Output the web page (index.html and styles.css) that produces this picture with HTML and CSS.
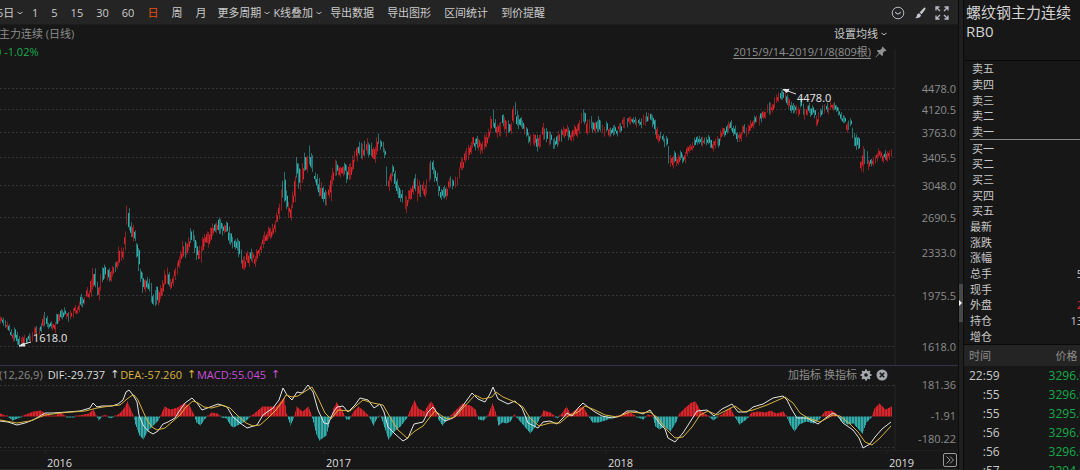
FILE: index.html
```html
<!DOCTYPE html>
<html lang="zh-CN">
<head>
	<meta charset="UTF-8">
	<title>螺纹钢主力连续</title>
	<link rel="stylesheet" href="styles.css">
</head>
<body>
	<div class="app">
		<main class="main">
			<nav class="toolbar">
				<button class="cycle">5日<svg class="chev" viewBox="0 0 6 4"><path d="M.5 .8Q3 4.4 5.5 .8"/></svg></button>
				<div class="periods">
					<button>1</button>
					<button>5</button>
					<button>15</button>
					<button>30</button>
					<button>60</button>
					<button class="active">日</button>
					<button>周</button>
					<button>月</button>
				</div>
				<button class="more">更多周期<svg class="chev" viewBox="0 0 6 4"><path d="M.5 .8Q3 4.4 5.5 .8"/></svg></button>
				<button class="overlay">K线叠加<svg class="chev" viewBox="0 0 6 4"><path d="M.5 .8Q3 4.4 5.5 .8"/></svg></button>
				<div class="tools">
					<button>导出数据</button>
					<button>导出图形</button>
					<button>区间统计</button>
					<button>到价提醒</button>
				</div>
				<div class="icons">
					<button aria-label="展开"><svg viewBox="0 0 14 14"><circle cx="7" cy="7" r="5.8" fill="none" stroke="#b5b8c0"/><path d="M4.3 6Q7 10 9.7 6" fill="none" stroke="#b5b8c0" stroke-width="1.2"/></svg></button>
					<button aria-label="画线"><svg viewBox="0 0 14 14"><path d="M12 1.6Q13 2.3 12.2 3.6L8.6 8.3 6.6 6.6 10.8 2.1Q11.5 1.3 12 1.6Z" fill="#c6c9d2"/><path d="M6 7.2 8 9Q7.6 12.2 2.2 12.3 3.8 11.2 3.9 9.5 4.2 7.4 6 7.2Z" fill="#c6c9d2"/></svg></button>
					<button aria-label="全屏"><svg viewBox="0 0 14 14"><path d="M1 4.500V1H4.500M9.500 1H13V4.500M13 9.500V13H9.500M4.500 13H1V9.500M1.500 1.500 5 5M12.500 1.500 9 5M12.500 12.500 9 9M1.500 12.500 5 9" fill="none" stroke="#b9bcc6" stroke-width="1.300"/></svg></button>
				</div>
			</nav>
			<div class="info">
				<span class="name">主力连续 (日线)</span>
				<button class="right-item">设置均线<svg class="chev" viewBox="0 0 6 4"><path d="M.5 .8Q3 4.4 5.5 .8"/></svg></button>
			</div>
			<div class="info">
				<span class="change">0 -1.02%</span>
				<a class="range" href="#">2015/9/14-2019/1/8(809根)</a>
				<svg class="pin" viewBox="0 0 12 12"><path d="M7.5 .5 11.5 4.5 10.5 5.2 9.7 5 8 7 8 9.3 7 10 4.6 7.7 .8 11.4 .5 11 4 7.1 1.9 5 2.7 4 5 4.1 7 2.3 6.8 1.4Z" fill="#8f8f8f"/></svg>
			</div>
			<svg class="kline" id="kline"></svg>
			<section class="macd">
				<div class="legend">
					<span>(12,26,9)</span>
					<span class="dif">DIF:-29.737</span><i class="dif">↑</i>
					<span class="dea">DEA:-57.260</span><i class="dea">↑</i>
					<span class="bar">MACD:55.045</span><i class="bar">↑</i>
					<div class="actions">
						<button>加指标</button>
						<button>换指标</button>
						<button class="ico" aria-label="设置"><svg viewBox="0 0 12 12"><circle cx="6" cy="6" r="3" fill="none" stroke="#a5a8ad" stroke-width="2.4"/><path d="M6 .5V2.5M6 9.5V11.5M.5 6H2.5M9.5 6H11.5M2.1 2.1 3.5 3.5M8.5 8.5 9.9 9.9M9.9 2.1 8.5 3.5M3.5 8.5 2.1 9.9" stroke="#a5a8ad" stroke-width="2"/></svg></button>
						<button class="ico" aria-label="关闭"><svg viewBox="0 0 12 12"><circle cx="6" cy="6" r="5.5" fill="#a5a8ad"/><path d="M3.8 3.8 8.2 8.2M8.2 3.8 3.8 8.2" stroke="#171717" stroke-width="1.6"/></svg></button>
					</div>
				</div>
				<svg class="macd-plot" id="macd"></svg>
			</section>
			<footer class="axis">
				<svg class="years" id="years"></svg>
				<button class="expand" aria-label="更多"><svg viewBox="0 0 14 14"><rect x=".5" y=".5" width="13" height="13" rx="1.5"/><path d="M3.5 3.5 7 7 3.5 10.5M7 3.5 10.5 7 7 10.5"/></svg></button>
			</footer>
		</main>
		<div class="splitter"><button class="handle" aria-label="收起"></button></div>
		<aside class="side">
			<header class="title">
				<h1>螺纹钢主力连续</h1>
				<p>RB0</p>
			</header>
			<dl class="quotes">
				<div class="lv"><dt>卖五</dt><dd></dd></div>
				<div class="lv"><dt>卖四</dt><dd></dd></div>
				<div class="lv"><dt>卖三</dt><dd></dd></div>
				<div class="lv"><dt>卖二</dt><dd></dd></div>
				<div class="lv last-ask"><dt>卖一</dt><dd></dd></div>
				<div class="lv"><dt>买一</dt><dd></dd></div>
				<div class="lv"><dt>买二</dt><dd></dd></div>
				<div class="lv"><dt>买三</dt><dd></dd></div>
				<div class="lv"><dt>买四</dt><dd></dd></div>
				<div class="lv"><dt>买五</dt><dd></dd></div>
				<div><dt>最新</dt><dd></dd></div>
				<div><dt>涨跌</dt><dd></dd></div>
				<div><dt>涨幅</dt><dd></dd></div>
				<div><dt>总手</dt><dd>5</dd></div>
				<div><dt>现手</dt><dd></dd></div>
				<div><dt>外盘</dt><dd class="red">2</dd></div>
				<div><dt>持仓</dt><dd>13</dd></div>
				<div><dt>增仓</dt><dd></dd></div>
			</dl>
			<div class="ticks">
				<table>
					<thead><tr><th>时间</th><th>价格</th></tr></thead>
					<tbody>
						<tr><td>22:59</td><td>3296.0</td></tr>
						<tr><td>:55</td><td>3296.0</td></tr>
						<tr><td>:55</td><td>3295.0</td></tr>
						<tr><td>:56</td><td>3296.0</td></tr>
						<tr><td>:56</td><td>3296.0</td></tr>
						<tr><td>:57</td><td>3294.0</td></tr>
					</tbody>
				</table>
			</div>
		</aside>
	</div>
	<script src="chart.js"></script>
</body>
</html>
```

FILE: styles.css
```css
*{
	margin: 0;
	padding: 0;
	box-sizing: border-box;
}
body{
	background: #171717;
	color: #c8c8c8;
	font: 11px/18px "Open Sans", "Noto Sans CJK SC", sans-serif;
	overflow: hidden;
}
button{
	background: none;
	border: 0;
	color: inherit;
	font: inherit;
	white-space: nowrap;
}
svg{
	display: block;
}
svg text{
	font-size: 11px;
}
.app{
	display: grid;
	grid-template-columns: minmax(0, 1fr) 6px 116px;
	height: 100vh;
}
.main{
	display: flex;
	flex-direction: column;
	min-width: 0;
	overflow: hidden;
}

/* 工具栏 */
.toolbar{
	display: flex;
	align-items: center;
	height: 25px;
	flex: none;
	padding-top: 2px;
	background: #242424;
	border-bottom: 1px solid #1c1c1c;
	color: #cccccc;
}
.toolbar button, .right-item{
	display: flex;
	align-items: center;
	gap: 3px;
}
.chev{
	width: 6px;
	height: 4px;
	fill: none;
	stroke: #c0c0c0;
}
.cycle{
	width: 32px;
	margin-left: -3px;
	margin-right: 3px;
}
.periods, .tools{
	display: flex;
	gap: 13px;
}
.active{
	color: #e8500c !important;
}
.more{
	margin-left: 11px;
}
.overlay{
	margin: 0 8px 0 3px;
}
.icons{
	display: flex;
	gap: 8px;
	margin-left: auto;
	padding-right: 9px;
}
.icons svg{
	width: 14px;
	height: 14px;
}

/* K线 */
.info{
	display: flex;
	align-items: center;
	height: 18px;
	flex: none;
	padding-right: 71px;
}
.name{
	margin-left: -1px;
	color: #8c8c8c;
}
.change{
	margin-left: -5px;
	color: #18ad4c;
}
.right-item{
	margin-left: auto;
}
.range{
	margin-left: auto;
	color: #8f8f8f;
	text-underline-offset: 2px;
}
.pin{
	width: 12px;
	height: 12px;
	margin-left: 4px;
}
.kline{
	width: 100%;
	flex: 1;
	min-height: 0;
}
.kline, .macd-plot, .years{
	overflow: visible;
}
.grid{
	stroke: #34353b;
	stroke-dasharray: 2 2;
}
.frame{
	stroke: #262628;
}
.scale{
	fill: #8c8c8c;
	text-anchor: end;
}
.note{
	fill: #e8e8e8;
}
.arrow{
	stroke: #e0e0e0;
	fill: #e0e0e0;
}
.up{
	stroke: #f0262e;
}
.down{
	stroke: #35bcbc;
}
.wick{
	opacity: .55;
}
.body{
	opacity: .9;
}
.line-dif{
	fill: none;
	stroke: #e4e4e4;
}
.line-dea{
	fill: none;
	stroke: #d9b33c;
}

/* MACD */
.macd{
	flex: none;
	border-top: 1px solid #33334a;
}
.legend{
	display: flex;
	align-items: center;
	height: 18px;
	padding-right: 70px;
	color: #8c8c8c;
}
.legend > span:first-child{
	margin-left: -1px;
}
.legend i{
	width: 10px;
	margin-left: 5px;
	font: 11px/18px "DejaVu Sans", sans-serif;
}
.legend .dif{
	color: #dcdcdc;
}
.legend span.dif{
	margin-left: 5px;
}
.legend .dea{
	color: #dcb53c;
}
.legend .bar{
	color: #c850da;
}
.actions{
	display: flex;
	align-items: center;
	gap: 3px;
	margin-left: auto;
}
.ico svg{
	width: 12px;
	height: 12px;
}
.ico + .ico{
	margin-left: 1px;
}
.macd-plot{
	width: 100%;
	height: 66px;
}
.axis{
	display: flex;
	align-items: center;
	height: 20px;
	flex: none;
	padding-right: 1px;
	border-top: 1px solid #1f1f1f;
	border-bottom: 1px solid #2c2c2c;
}
.years{
	flex: 1;
	min-width: 0;
	height: 18px;
	fill: #dedede;
}
.expand svg{
	width: 14px;
	height: 14px;
	fill: none;
	stroke: #9a9a9a;
}

/* 分隔条 */
.splitter{
	display: flex;
	flex-direction: column;
	background: #202020;
	border-left: 1px solid #0c0c0c;
	border-right: 1px solid #0c0c0c;
}
.handle{
	display: flex;
	align-items: center;
	height: 38px;
	margin-top: 284px;
	background: #484848;
}
.handle::before{
	content: "";
	border: 3px solid transparent;
	border-left-color: #fff;
	border-right: 0;
}

/* 右侧报价 */
.side{
	display: flex;
	flex-direction: column;
	min-width: 0;
	overflow: hidden;
}
.title{
	height: 61px;
	flex: none;
	padding: 3px 0 0 2px;
	border-bottom: 1px solid #0a0a0a;
	color: #d2d2d2;
	white-space: nowrap;
}
.title h1, .title p{
	font-size: 15px;
	font-weight: normal;
	line-height: 19px;
}
.quotes{
	display: flex;
	flex-direction: column;
	flex: 1;
	min-height: 0;
	margin-right: -3px;
}
.quotes div{
	display: flex;
	align-items: center;
	justify-content: space-between;
	flex: 1;
	min-height: 0;
	margin-left: 6px;
	line-height: 15px;
}
.quotes .lv dt{
	padding-left: 2px;
}
.quotes .last-ask{
	border-bottom: 1px solid #8a8a8a;
}
.red{
	color: #e8262e;
}
.ticks{
	height: 126px;
	flex: none;
	overflow: hidden;
	border-top: 1px solid #0a0a0a;
}
.ticks table{
	border-collapse: collapse;
	font-size: 12px;
	white-space: nowrap;
}
.ticks th{
	height: 21px;
	padding-left: 5px;
	background: #242424;
	color: #8c8c8c;
	font-size: 11px;
	font-weight: normal;
	text-align: left;
}
.ticks th + th{
	width: 100px;
	padding-left: 56px;
}
.ticks td{
	height: 19px;
	padding-left: 5px;
	text-align: right;
}
.ticks td + td{
	padding-left: 49px;
	color: #14ab49;
	text-align: left;
}
```

FILE: chart.js
```js
// 宽 958，其中右侧刻度占 63
var W = 958, AXIS = 63;

// x, 最高, 最低
var bars = "0,317,322 4,321,326 8,325,331 10,331,336 12,333,341 14,328,340 18,337,346 19,341,346 22,336,343 27,336,341 31,334,341 35,324,333 38,327,332 42,317,327 45,311,323 48,321,326 52,323,328 54,321,329 56,312,322 60,311,318 63,309,315 66,314,319 70,311,318 74,307,313 77,308,312 79,295,308 82,297,304 84,299,305 86,290,298 89,291,298 91,268,290 93,268,286 95,275,290 97,290,297 99,280,297 101,273,285 103,264,280 106,270,279 107,265,276 110,272,281 113,266,275 116,264,270 117,253,268 119,241,258 121,253,258 123,243,255 125,226,246 126,207,225 128,208,228 130,222,235 132,227,241 134,230,240 136,243,256 138,250,271 140,270,282 142,273,290 143,281,292 146,276,286 148,280,290 150,282,300 152,294,303 154,290,304 156,286,303 157,286,305 159,292,300 161,282,297 163,277,287 165,269,285 168,272,283 170,280,288 173,273,283 175,270,278 177,258,271 179,255,264 181,248,260 183,239,256 185,245,255 187,240,253 189,240,250 190,227,240 193,230,238 195,240,260 197,248,260 200,247,260 202,237,250 206,233,243 208,233,245 211,227,240 213,222,230 217,227,235 218,217,230 221,223,235 223,225,232 226,223,232 228,228,242 231,237,247 233,240,250 235,238,243 237,240,255 240,251,263 243,258,269 247,253,263 250,251,262 253,255,263 255,256,268 257,250,257 260,243,250 263,233,245 266,235,243 269,227,237 273,223,232 275,217,226 277,210,217 279,195,215 282,180,195 284,172,200 287,203,215 290,207,220 292,192,208 294,177,200 296,159,178 297,162,187 299,172,193 301,170,188 303,157,173 306,157,172 308,147,165 309,151,163 312,156,170 314,172,180 317,175,192 319,187,203 321,183,198 323,189,203 326,192,204 328,188,198 330,175,198 333,168,178 335,157,175 337,162,172 341,170,178 343,162,172 345,160,170 346,167,183 349,168,180 351,155,175 353,153,162 356,150,162 359,142,153 362,145,160 364,140,153 367,143,155 370,145,157 373,152,162 375,142,161 378,137,145 381,140,150 384,150,158 385,160,182 387,178,190 390,173,182 392,167,177 395,178,193 399,190,200 402,190,200 403,197,207 406,195,209 408,190,200 411,185,197 413,176,187 416,178,199 419,187,195 421,180,193 423,187,196 426,180,192 429,158,178 431,162,173 435,168,182 437,180,187 439,187,197 443,188,197 446,185,196 449,175,183 453,180,188 456,177,183 458,167,175 462,157,168 465,153,163 468,145,157 471,138,147 475,138,148 479,142,153 482,140,150 485,133,147 488,128,137 491,110,127 493,115,127 495,122,132 497,128,138 500,122,135 502,117,127 505,122,136 507,118,130 510,122,131 512,108,123 514,104,115 517,113,127 521,117,125 523,125,133 527,128,137 529,138,148 532,138,145 535,135,148 537,130,147 539,142,151 542,125,140 544,128,137 547,132,146 549,130,140 552,137,145 555,138,148 558,133,145 562,130,138 565,127,135 567,128,138 570,135,143 573,128,138 577,123,135 580,113,123 583,111,122 586,120,133 589,117,128 592,122,132 595,123,132 598,119,132 602,127,134 606,124,132 609,128,135 613,125,132 616,128,133 620,122,130 624,117,125 628,118,124 633,117,123 638,120,126 643,118,127 645,114,122 649,113,118 652,118,127 655,123,138 657,133,140 661,132,137 663,137,143 666,140,147 667,143,163 669,153,163 671,162,174 673,152,163 677,158,165 680,153,160 683,155,163 687,148,155 690,145,150 692,142,148 695,134,142 698,137,143 701,140,147 705,135,140 709,137,145 712,143,151 717,138,145 721,131,139 725,126,133 730,122,130 733,127,135 738,133,141 742,128,135 747,128,135 750,123,132 753,116,123 756,118,124 760,114,121 763,113,119 766,107,115 768,102,112 772,103,110 775,99,107 778,94,100 782,89,99 785,93,102 788,98,107 792,105,112 795,108,115 798,107,114 800,99,107 803,108,118 805,107,115 808,105,112 812,108,115 816,115,123 819,112,120 823,107,113 826,103,110 828,108,113 833,102,108 837,107,113 840,113,120 843,117,122 846,122,130 850,121,127 852,127,135 854,132,145 857,137,151 859,138,147 860,160,168 862,150,173 865,152,162 868,160,167 872,157,163 875,153,159 879,148,155 881,155,162 884,153,159 887,153,161 890,148,153";

// 柱高，零轴 416.5
var hist = "0,3 7,0 12,-4 20,-1 25,2 33,5 40,6 45,3 52,0 55,1 60,4 67,-1 72,-1 78,1 88,3 93,7 96,1 98,-4 104,2 110,-2 116,1 120,4 124,9 127,15 130,8 133,1 135,-8 139,-19 143,-23 147,-15 152,-10 158,-4 161,3 164,10 170,7 177,9 183,13 189,11 193,3 196,-6 200,-9 204,-3 207,0 211,4 217,3 221,-1 226,-2 230,-9 233,-11 239,-8 245,-5 250,0 255,4 262,10 270,10 276,10 280,15 284,19 286,3 290,-9 294,0 296,10 302,5 308,10 311,2 313,-6 316,-18 319,-24 326,-19 330,-3 333,8 336,14 341,8 346,-3 349,-3 353,5 358,10 363,6 368,1 373,-9 377,-1 380,1 383,-8 388,-23 394,-15 400,-10 407,-1 409,5 414,16 418,8 424,5 428,12 431,15 435,8 438,-3 442,-9 447,-3 451,2 456,7 462,13 470,11 475,7 478,-3 483,-4 487,0 490,8 492,13 495,5 498,-9 502,-6 506,-7 510,-5 514,2 518,-3 524,-10 530,-17 535,-10 540,-1 543,6 550,4 557,-2 562,4 566,10 570,3 577,8 583,10 588,0 592,-6 598,-6 605,-4 612,-1 620,1 626,5 632,3 637,-1 643,-3 647,2 652,1 655,-10 659,-13 664,-10 670,-15 676,-5 679,3 685,9 691,14 695,15 700,6 707,1 713,-4 718,0 724,4 730,9 734,0 739,-8 746,-3 751,4 758,5 765,4 770,6 776,3 783,5 786,0 790,-9 794,-15 799,-8 806,-5 813,-7 819,-3 824,5 831,6 836,3 840,-4 847,-8 853,-7 859,-14 862,-17 866,-6 871,-1 874,8 879,13 885,7 891,10";

var dif = "0,421 8,422 17,425 25,423 33,420 40,416 45,413 53,413 67,412 80,411 90,408 93,403 97,407 102,406 112,406 118,404 123,400 126,392 129,390 133,395 137,402 139,415 143,425 148,431 153,434 158,431 163,424 168,422 175,418 180,410 185,403 192,398 197,403 202,410 210,407 218,404 227,407 233,417 240,423 247,428 257,425 263,415 273,408 279,400 283,388 287,395 292,400 297,392 302,393 308,385 313,392 318,410 324,423 328,424 333,413 337,407 343,406 348,412 355,405 360,398 368,400 374,408 380,404 384,412 388,427 395,434 403,441 408,438 414,424 423,422 428,412 433,407 440,417 445,421 453,418 462,407 472,393 478,399 485,402 490,394 493,387 498,399 508,404 515,401 522,408 528,423 538,428 543,422 550,421 557,424 563,418 567,413 572,416 578,408 583,403 588,407 595,412 602,416 612,418 620,416 627,411 635,411 643,414 650,410 655,417 660,424 665,429 668,438 675,442 683,433 690,422 697,411 707,410 714,416 722,409 732,404 738,412 747,412 753,407 763,404 773,398 783,396 787,400 792,410 797,418 807,418 818,424 827,417 833,413 838,416 843,423 853,430 859,438 863,448 870,444 875,437 882,429 891,422";
var dea = "0,420 17,423 30,421 45,415 60,413 85,411 97,408 110,406 120,405 127,399 131,396 134,395 138,400 142,409 147,420 152,427 157,430 165,428 172,422 180,415 186,407 193,401 198,403 204,407 212,408 222,405 230,408 238,416 246,423 253,426 260,425 268,418 276,410 282,402 286,395 292,397 298,396 304,392 312,387 318,398 325,413 331,419 338,410 350,411 363,400 373,403 383,405 390,417 398,430 407,438 415,431 423,426 430,417 435,411 442,416 447,419 455,417 463,408 475,395 483,399 492,397 496,392 503,397 515,402 523,407 530,418 539,426 550,423 560,423 568,416 578,412 585,406 595,410 605,415 617,417 630,412 640,413 650,412 658,418 667,430 675,438 683,437 692,427 700,415 708,411 717,415 727,410 735,406 743,412 753,410 767,405 785,397 793,403 800,413 808,418 820,422 833,415 840,416 850,424 858,432 865,442 872,445 880,438 891,426";

function parse(s){
	return s.split(" ").map(function(p){ return p.split(",").map(Number); });
}
// 两点之间线性插值
function at(list, x, k){
	for (var i = 1; i < list.length; i++) {
		if (x <= list[i][0]) {
			var a = list[i - 1], b = list[i];
			return a[k] + (b[k] - a[k]) * (x - a[0]) / (b[0] - a[0]);
		}
	}
	return list[list.length - 1][k];
}
function scaler(el, top, height){
	var box = el.getBoundingClientRect();
	return {
		x: function(v){ return v * (box.width - AXIS) / (W - AXIS); },
		y: function(v){ return (v - top) * box.height / height; },
		w: box.width
	};
}
function line(x1, y1, x2, y2, cls){
	return '<line x1="' + x1 + '" y1="' + y1 + '" x2="' + x2 + '" y2="' + y2 + '" class="' + cls + '"/>';
}
function text(x, y, s, cls){
	return '<text x="' + x + '" y="' + y + '" class="' + cls + '">' + s + '</text>';
}

function drawKline(){
	var el = document.getElementById("kline");
	var s = scaler(el, 61, 304), out = "", list = parse(bars);
	var rows = [[88, "4478.0"], [109, "4120.5"], [132, "3763.0"], [157, "3405.5"], [185, "3048.0"], [217, "2690.5"], [252, "2333.0"], [295, "1975.5"], [346, "1618.0"]];
	rows.forEach(function(r){
		var y = Math.round(s.y(r[0])) + 0.5;
		out += line(0, y, s.x(895), y, "grid") + text(s.w - 2, y + 4, r[1], "scale");
	});
	out += line(s.x(895), -11, s.x(895), s.y(365), "frame");
	var seed = 7;
	function rnd(){
		seed = (seed * 16807) % 2147483647;
		return seed / 2147483647;
	}
	// 每根两列：一列影线一列实体
	for (var x = 0; x <= 890; x += 2) {
		var hi = at(list, x, 1), lo = at(list, x, 2), len = lo - hi;
		var trend = hi + lo - at(list, x + 2, 1) - at(list, x + 2, 2);
		var cls = rnd() * 16 - 8 < trend ? "up" : "down";
		var px = Math.round(s.x(x)) + 0.5;
		var shift = (rnd() - 0.5) * 5;
		if (x > 776 && x < 790 || x < 24) shift = 0;
		hi += shift;
		lo += shift;
		var left = rnd() < 0.5 ? 0 : 1;
		out += line(px + left, s.y(hi - rnd() * 2), px + left, s.y(lo + rnd() * 2), cls + " wick");
		if (rnd() < 0.75) {
			out += line(px + 1 - left, s.y(hi + len * 0.35 * rnd()), px + 1 - left, s.y(lo - len * 0.35 * rnd()), cls + " body");
		}
	}
	out += line(s.x(796), s.y(94), s.x(785), s.y(90), "arrow");
	out += '<path class="arrow" d="M' + s.x(783) + ' ' + s.y(89.5) + 'l6 0l-2 3z"/>';
	out += text(s.x(797), s.y(102), "4478.0", "note");
	out += line(s.x(31), s.y(342), s.x(21), s.y(345), "arrow");
	out += '<path class="arrow" d="M' + s.x(19) + ' ' + s.y(346) + 'l6 0l-1 -3z"/>';
	out += text(s.x(33), s.y(342), "1618.0", "note");
	el.innerHTML = out;
}

function drawMacd(){
	var el = document.getElementById("macd");
	var s = scaler(el, 384, 66), out = "", list = parse(hist);
	[385, 447].forEach(function(v){
		out += line(0, s.y(v) + 0.5, s.x(895), s.y(v) + 0.5, "grid");
	});
	out += line(s.x(895), 0, s.x(895), s.y(450), "frame");
	for (var x = 0; x <= 891; x++) {
		var v = at(list, x, 1);
		if (Math.abs(v) < 1) v = v < 0 ? -1 : 1;
		var px = Math.round(s.x(x)) + 0.5;
		out += line(px, s.y(416.5), px, s.y(416.5 - v), (v > 0 ? "up" : "down") + (x % 3 == 2 ? " wick" : " body"));
	}
	[[dif, "line-dif"], [dea, "line-dea"]].forEach(function(d){
		var pts = parse(d[0]).map(function(p){ return s.x(p[0]) + "," + s.y(p[1]); });
		out += '<polyline class="' + d[1] + '" points="' + pts.join(" ") + '"/>';
	});
	out += text(s.w - 2, s.y(389), "181.36", "scale");
	out += text(s.w - 2, s.y(420), "-1.91", "scale");
	out += text(s.w - 2, s.y(443), "-180.22", "scale");
	el.innerHTML = out;
}

function drawYears(){
	var el = document.getElementById("years");
	var w = document.getElementById("kline").getBoundingClientRect().width;
	var out = "";
	[[47, "2016"], [326, "2017"], [608, "2018"], [889, "2019"]].forEach(function(p){
		var x = p[0] * (w - AXIS) / (W - AXIS);
		out += line(x - 2, 0, x - 2, 3, "frame") + text(x, 16, p[1], "");
	});
	el.innerHTML = out;
}

function draw(){
	drawKline();
	drawMacd();
	drawYears();
}
window.addEventListener("resize", draw);
draw();
```
